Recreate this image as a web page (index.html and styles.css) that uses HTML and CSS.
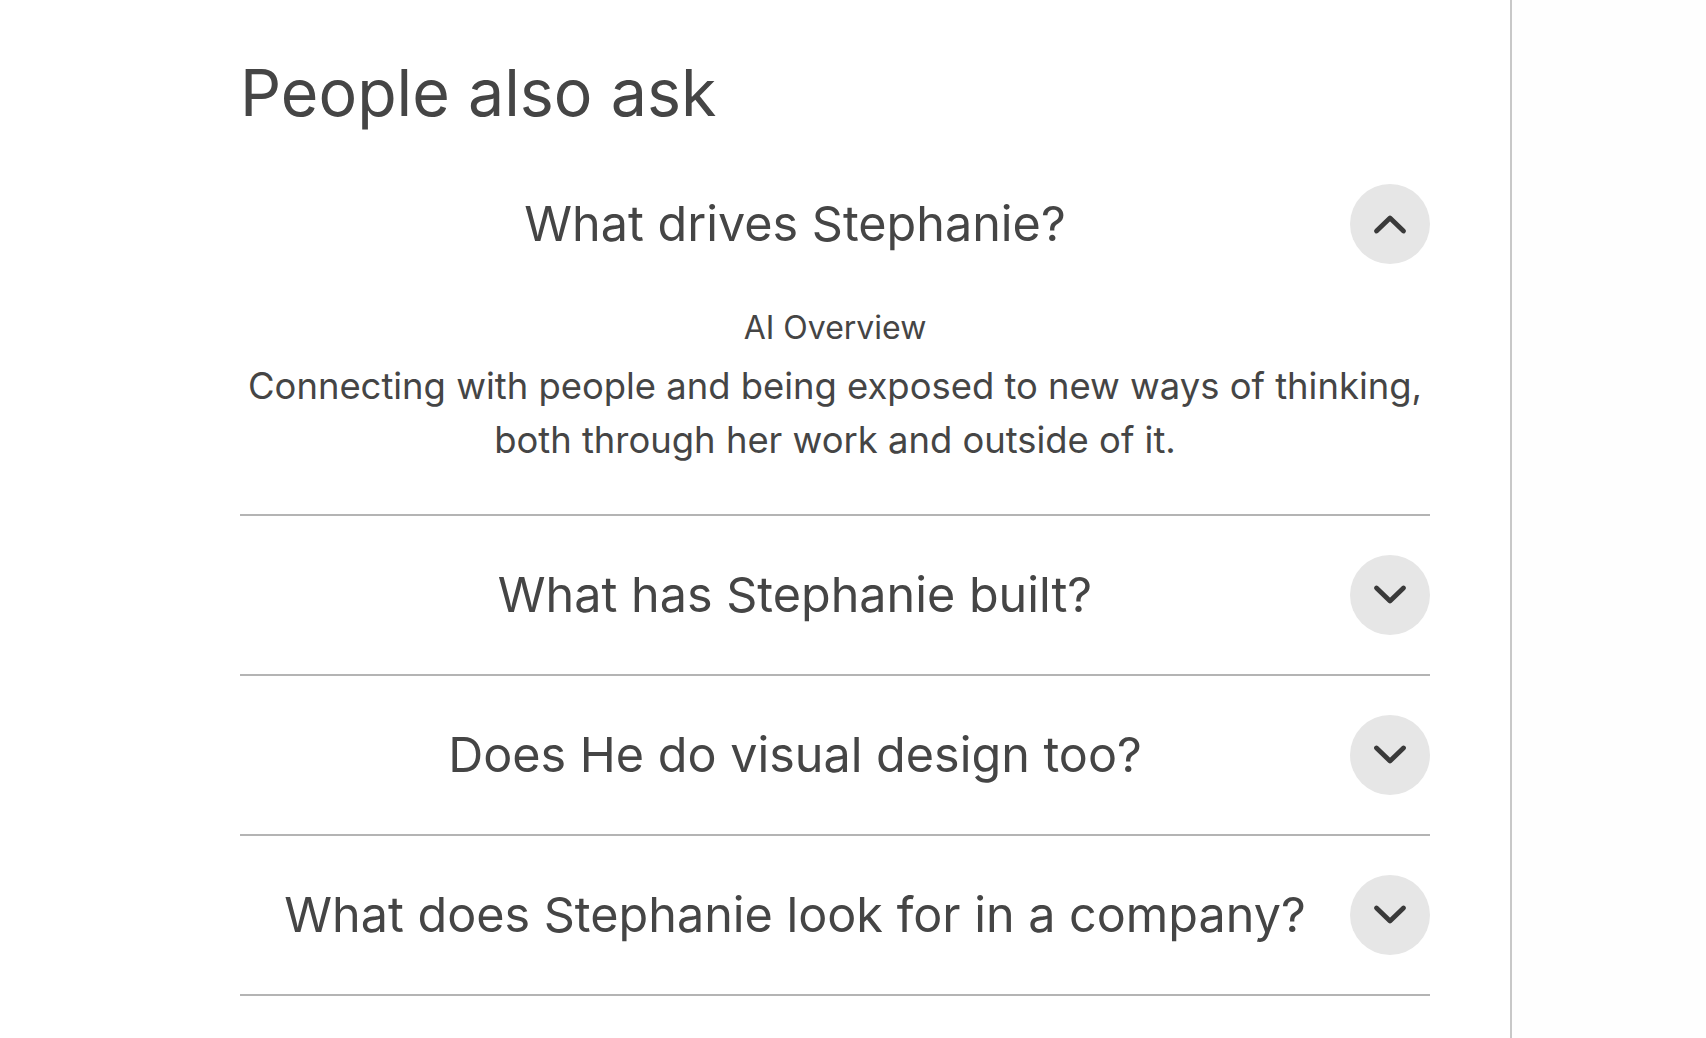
FILE: index.html
```html
<!DOCTYPE html>
<html lang="en">
<head>
<meta charset="utf-8">
<title>People also ask</title>
<link rel="stylesheet" href="styles.css">
</head>
<body>
<div class="page">
  <main class="main">
    <h2 class="title">People also ask</h2>
    <div class="faq">
      <div class="item open">
        <div class="q-row">
          <span class="q">What drives Stephanie?</span>
          <button class="toggle" aria-label="Collapse">
            <svg width="36" height="22" viewBox="0 0 36 22"><path d="M4.5 18 L18 5 L31.5 18" fill="none" stroke="#3a3a3a" stroke-width="4.8" stroke-linecap="round" stroke-linejoin="round"/></svg>
          </button>
        </div>
        <div class="answer">
          <div class="label">AI Overview</div>
          <p class="text">Connecting with people and being exposed to new ways of thinking, both through her work and outside of it.</p>
        </div>
      </div>
      <div class="item">
        <div class="q-row">
          <span class="q">What has Stephanie built?</span>
          <button class="toggle" aria-label="Expand">
            <svg width="36" height="22" viewBox="0 0 36 22"><path d="M4.5 4 L18 17 L31.5 4" fill="none" stroke="#3a3a3a" stroke-width="4.8" stroke-linecap="round" stroke-linejoin="round"/></svg>
          </button>
        </div>
      </div>
      <div class="item">
        <div class="q-row">
          <span class="q">Does He do visual design too?</span>
          <button class="toggle" aria-label="Expand">
            <svg width="36" height="22" viewBox="0 0 36 22"><path d="M4.5 4 L18 17 L31.5 4" fill="none" stroke="#3a3a3a" stroke-width="4.8" stroke-linecap="round" stroke-linejoin="round"/></svg>
          </button>
        </div>
      </div>
      <div class="item">
        <div class="q-row">
          <span class="q">What does Stephanie look for in a company?</span>
          <button class="toggle" aria-label="Expand">
            <svg width="36" height="22" viewBox="0 0 36 22"><path d="M4.5 4 L18 17 L31.5 4" fill="none" stroke="#3a3a3a" stroke-width="4.8" stroke-linecap="round" stroke-linejoin="round"/></svg>
          </button>
        </div>
      </div>
    </div>
  </main>
  <aside class="side"></aside>
</div>
</body>
</html>
```
FILE: styles.css
```css
html, body {
  margin: 0;
  padding: 0;
  background: #ffffff;
}
body {
  font-family: Inter, "Noto Sans", "Liberation Sans", sans-serif;
  color: #454545;
}
.page {
  display: flex;
  min-height: 1038px;
}
.main {
  width: 1512px;
  box-sizing: border-box;
  padding: 0 80px 0 240px;
  border-right: 2px solid #c8c8c8;
}
.side {
  flex: 1;
  background: #fefefe;
}
.title {
  margin: 55px 0 13px;
  font-size: 64.5px;
  font-weight: 400;
  line-height: 1.2;
  color: #454545;
}
.item {
  padding: 39px 0;
  border-bottom: 2px solid #b4b4b4;
}
.q-row {
  display: flex;
  align-items: center;
}
.q {
  flex: 1;
  text-align: center;
  font-size: 48.5px;
  line-height: 1.21;
  color: #454545;
}
.toggle {
  width: 80px;
  height: 80px;
  border-radius: 50%;
  border: none;
  background: #e6e6e6;
  display: flex;
  align-items: center;
  justify-content: center;
  padding: 0;
  flex: none;
}
.toggle svg {
  display: block;
}
.answer {
  text-align: center;
  padding-top: 45px;
  padding-bottom: 8px;
}
.label {
  font-size: 32px;
  line-height: 1.21;
  margin-bottom: 11px;
}
.text {
  margin: 0;
  font-size: 36.4px;
  line-height: 54px;
}
```
